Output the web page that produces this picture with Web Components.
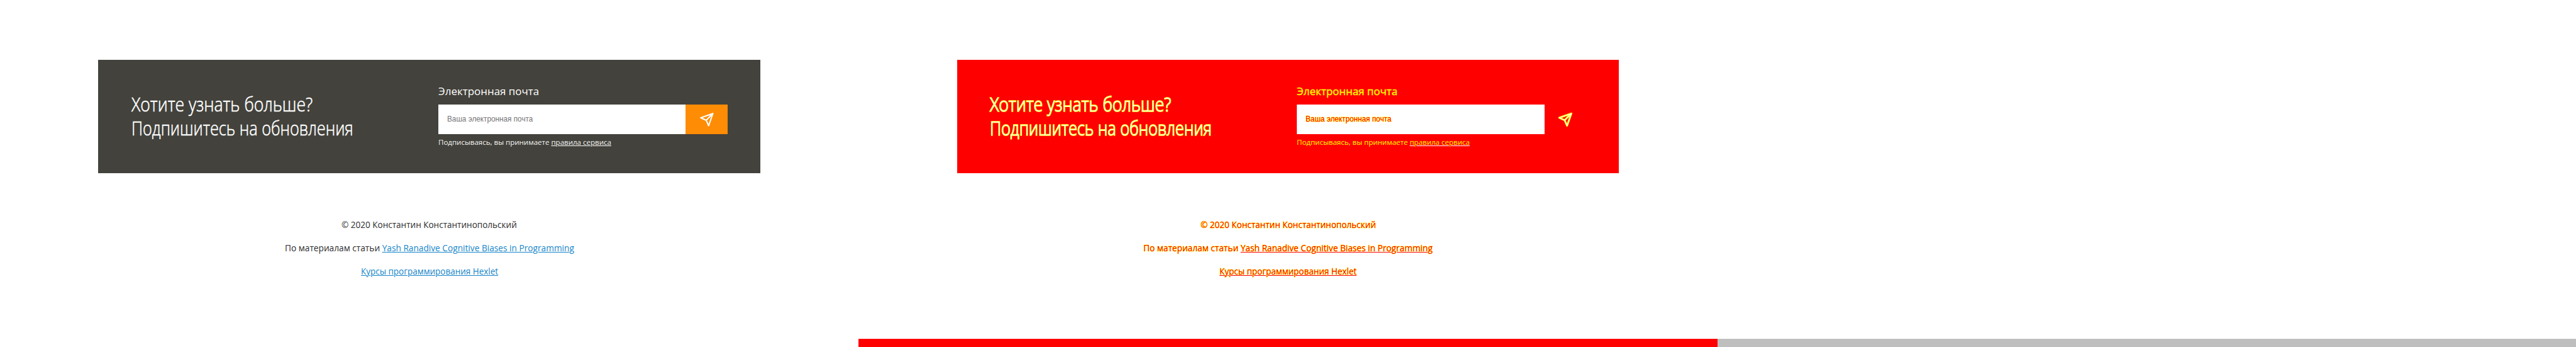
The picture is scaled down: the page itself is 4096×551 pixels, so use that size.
<!DOCTYPE html>
<html lang="ru"><head><meta charset="utf-8"><title>Подписка</title>
<style>
:root{--u:calc(100vw / 4320)}
html,body{margin:0;padding:0;background:#fff;overflow:hidden}
body{font-family:"Open Sans","Noto Sans",sans-serif}
</style></head><body>
<compare-board>
<subscribe-page></subscribe-page>
<subscribe-page class="diff"></subscribe-page>
<blank-page></blank-page>
</compare-board>
<script>
const U = innerWidth / 4320;
const define = (name, html, ready) => {
  const t = document.createElement('template');
  t.innerHTML = html;
  customElements.define(name, class extends HTMLElement {
    connectedCallback() {
      if (this.shadowRoot) return;
      this.attachShadow({mode:'open'}).append(t.content.cloneNode(true));
      if (ready) ready(this);
    }
  });
};

// A single line of text scaled horizontally to the width given in "w".
define('fit-text', `<style>
:host{display:block;white-space:nowrap;width:calc(var(--w)*var(--u));height:1lh}
span{display:inline-block;transform-origin:0 50%;white-space:nowrap}
</style><span><slot></slot></span>`, el => {
  const w = +el.getAttribute('w');
  el.style.setProperty('--w', w);
  const s = el.shadowRoot.querySelector('span');
  const fit = () => {
    s.style.transform = 'none';
    const n = s.getBoundingClientRect().width;
    if (n) s.style.transform = `scaleX(${w * U / n})`;
  };
  requestAnimationFrame(fit);
  document.fonts.ready.then(fit);
});

define('send-button', `<style>
:host{display:flex;align-items:flex-start;box-sizing:border-box;width:calc(70*var(--u));height:calc(50*var(--u));background:var(--accent);padding:calc(13.6*var(--u)) 0 0 calc(23.6*var(--u))}
svg{width:calc(23*var(--u));height:calc(23*var(--u));overflow:visible;display:block}
path{fill:none;stroke-linejoin:round;stroke-linecap:round}
.edge{stroke:var(--icon-edge);stroke-width:3.2}
.line{stroke:#fff;stroke-width:var(--icon-w)}
</style><svg viewBox="0 0 23 23"><path class="edge" d="M21.7 1.3 1.3 8.4 10.4 12.6 14.5 21.7ZM21.7 1.3 10.4 12.6"/><path class="line" d="M21.7 1.3 1.3 8.4 10.4 12.6 14.5 21.7ZM21.7 1.3 10.4 12.6"/></svg>`);

define('mail-field', `<style>
:host{display:flex;align-items:center;box-sizing:border-box;width:calc(415*var(--u));height:calc(50*var(--u));background:#fff;padding:0 0 0 calc(15*var(--u));color:var(--hint);
font:calc(13.33*var(--u))/calc(20*var(--u)) "Liberation Sans",Arial,sans-serif}
</style><slot></slot>`);

define('subscribe-box', `<style>
:host{display:flex;box-sizing:border-box;width:calc(1110*var(--u));height:calc(190*var(--u));background:var(--panel);color:#fff}
.title{box-sizing:border-box;width:calc(570*var(--u));padding:calc(55*var(--u)) 0 0 calc(55*var(--u));font-weight:300;font-size:calc(32*var(--u));line-height:calc(40*var(--u));-webkit-text-stroke:var(--title-stroke);paint-order:stroke fill}
.form{padding-top:calc(40*var(--u))}
.label{font-size:calc(18*var(--u));line-height:calc(26*var(--u));margin-bottom:calc(9*var(--u));color:var(--label);-webkit-text-stroke:var(--label-stroke);paint-order:stroke fill}
.row{display:flex}
mail-field{-webkit-text-stroke:var(--hint-stroke);paint-order:stroke fill}
.note{font-size:calc(12*var(--u));line-height:calc(18*var(--u));margin-top:calc(4.4*var(--u));color:var(--note)}
a{color:inherit;text-decoration:underline;text-decoration-color:#fff;text-decoration-thickness:1px;text-underline-offset:calc(1*var(--u))}
</style>
<div class="title"><fit-text w="304">Хотите узнать больше?</fit-text><fit-text w="372">Подпишитесь на обновления</fit-text></div>
<div class="form"><fit-text class="label" w="169">Электронная почта</fit-text>
<div class="row"><mail-field><fit-text w="143.8">Ваша электронная почта</fit-text></mail-field><send-button></send-button></div>
<fit-text class="note" w="290">Подписываясь, вы принимаете <a>правила сервиса</a></fit-text></div>`);

define('page-footer', `<style>
:host{display:flex;flex-direction:column;align-items:center;gap:calc(15*var(--u));font-size:calc(14.4*var(--u));line-height:calc(24*var(--u));color:var(--text);-webkit-text-stroke:var(--foot-stroke);paint-order:stroke fill}
a{color:var(--link);text-decoration:underline;text-decoration-thickness:1px;text-decoration-color:var(--link);text-underline-offset:calc(1.3*var(--u))}
</style>
<fit-text w="294">© 2020 Константин Константинопольский</fit-text>
<fit-text w="485">По материалам статьи <a>Yash Ranadive Cognitive Biases in Programming</a></fit-text>
<fit-text w="230"><a>Курсы программирования Hexlet</a></fit-text>`);

define('subscribe-page', `<style>
:host{--panel:#43423c;--accent:#ff8c05;--text:#2d2d2d;--link:#1685c9;--hint:#757575;--note:#f4f4f2;--label:#fff;--title-stroke:calc(.6*var(--u)) #fff;--label-stroke:0 transparent;--hint-stroke:0 transparent;--foot-stroke:0 transparent;--icon-edge:none;--icon-w:2.2;--strip:#fff;
display:flex;flex-direction:column;box-sizing:border-box;width:calc(1440*var(--u));height:100vh;padding-top:calc(100*var(--u));background:#fff}
:host(.diff){--panel:#f00;--accent:#f00;--text:#f00;--link:#f00;--hint:#f00;--note:#ff0;--label:#ff0;--title-stroke:calc(1.8*var(--u)) #ff0;--label-stroke:calc(.4*var(--u)) #ff0;--hint-stroke:calc(1*var(--u)) #ff0;--foot-stroke:calc(.9*var(--u)) #ff0;--icon-edge:#ff0;--icon-w:1.2;--strip:#f00}
subscribe-box{margin-left:calc(165*var(--u));flex:none}
page-footer{margin-top:calc(75*var(--u))}
.strip{margin-top:auto;height:calc(14*var(--u));background:var(--strip)}
</style><subscribe-box></subscribe-box><page-footer></page-footer><div class="strip"></div>`);

define('blank-page', `<style>
:host{display:flex;flex-direction:column;justify-content:flex-end;width:calc(1440*var(--u));height:100vh}
.strip{height:calc(14*var(--u));background:#bebebe}
</style><div class="strip"></div>`);

define('compare-board', `<style>:host{display:flex;width:100vw;height:100vh;overflow:hidden}</style><slot></slot>`);
</script></body></html>
